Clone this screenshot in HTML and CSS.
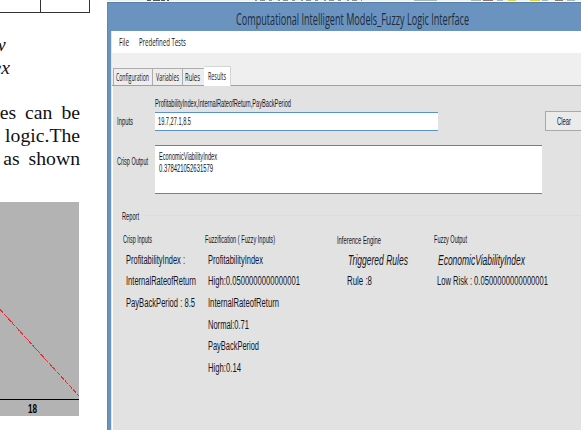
FILE: index.html
```html
<!DOCTYPE html>
<html lang="en">
<head>
    <meta charset="UTF-8">
    <meta name="viewport" content="width=device-width, initial-scale=1.0">
    <title>Fuzzy Logic Interface</title>
    <link rel="stylesheet" href="styles.css">
</head>
<body>

    <!-- Article column -->
    <div class="article">
        <div class="table-end"><div class="cell"></div><div class="cell last"></div></div>
        <div class="terms"><span>w</span><span>ex</span></div>
        <div class="paragraph">
            <p class="line"><span>es</span><span>can</span><span>be</span></p>
            <p class="line"><span>logic.The</span></p>
            <p class="line"><span>as</span><span>shown</span></p>
        </div>
        <svg class="chart" width="79" height="214">
            <rect width="79" height="214" fill="#b3b3b3"/>
            <path d="M0 107.500L79 194" stroke="#e2303a" stroke-width="1" stroke-dasharray="5 1" shape-rendering="crispEdges"/>
            <path d="M0 197.500H79" stroke="#000"/>
            <text x="28" y="211" textLength="9" lengthAdjust="spacingAndGlyphs" class="tick">18</text>
        </svg>
    </div>

    <!-- Application window -->
    <div class="side">
        <svg class="behind" width="474" height="2">
            <path d="M0 .5H474" stroke="#eef1f4"/>
            <path d="M40 .5H62" stroke="#555" stroke-dasharray="4 2 7 1"/>
            <path d="M148 .5H255" stroke="#8b8f92" stroke-dasharray="2 3 5 4 3 6"/>
            <path d="M307 .5H330M364 .5H374M390 .5H396M435 .5H441M460 .5H468" stroke="#a7b4bd"/>
            <path d="M376 .5H386M448 .5H456" stroke="#8d7770"/>
            <path d="M401 .5H409M423 .5H433" stroke="#d9d447"/>
        </svg>
        <div class="window">
            <div class="titlebar">
                <svg width="233" height="28"><text y="22" textLength="233" lengthAdjust="spacingAndGlyphs">Computational Intelligent Models_Fuzzy Logic Interface</text></svg>
            </div>
            <div class="client">
                <div class="menu">
                    <svg width="10" height="22"><text y="15" textLength="10" lengthAdjust="spacingAndGlyphs">File</text></svg>
                    <svg width="47" height="22"><text y="15" textLength="47" lengthAdjust="spacingAndGlyphs">Predefined Tests</text></svg>
                </div>
                <div class="tabs">
                    <div class="tab first"><svg width="33" height="16"><text y="12" textLength="33" lengthAdjust="spacingAndGlyphs">Configuration</text></svg></div>
                    <div class="tab"><svg width="23" height="16"><text y="12" textLength="23" lengthAdjust="spacingAndGlyphs">Variables</text></svg></div>
                    <div class="tab rules"><svg width="15" height="16"><text y="12" textLength="15" lengthAdjust="spacingAndGlyphs">Rules</text></svg></div>
                    <div class="tab active"><svg width="18" height="19"><text y="13" textLength="18" lengthAdjust="spacingAndGlyphs">Results</text></svg></div>
                </div>
                <div class="panel">
                    <svg class="hint" width="136" height="14"><text y="10" textLength="136" lengthAdjust="spacingAndGlyphs">ProfitabilityIndex,InternalRateofReturn,PayBackPeriod</text></svg>
                    <div class="inputs">
                        <svg class="label" width="16" height="19"><text y="14" textLength="16" lengthAdjust="spacingAndGlyphs">Inputs</text></svg>
                        <div class="field"><svg width="33" height="17"><text y="12" textLength="33" lengthAdjust="spacingAndGlyphs">19.7,27.1,8.5</text></svg></div>
                        <div class="clear"><svg width="14" height="18"><text y="13" textLength="14" lengthAdjust="spacingAndGlyphs">Clear</text></svg></div>
                    </div>
                    <div class="output">
                        <svg class="label" width="31" height="24"><text y="20" textLength="31" lengthAdjust="spacingAndGlyphs">Crisp Output</text></svg>
                        <div class="result">
                            <svg width="58" height="11"><text y="9" textLength="58" lengthAdjust="spacingAndGlyphs">EconomicViabilityIndex</text></svg>
                            <svg width="54" height="12"><text y="9.500" textLength="54" lengthAdjust="spacingAndGlyphs">0.378421052631579</text></svg>
                        </div>
                    </div>
                    <div class="legend">
                        <svg width="17" height="14"><text y="11" textLength="17" lengthAdjust="spacingAndGlyphs">Report</text></svg>
                    </div>
                    <div class="report">
                        <div class="col">
                            <svg class="head" width="29" height="14"><text y="10" textLength="29" lengthAdjust="spacingAndGlyphs">Crisp Inputs</text></svg>
                            <div class="rows">
                                <svg width="59" height="21.7"><text y="15" textLength="59" lengthAdjust="spacingAndGlyphs">ProfitabilityIndex :</text></svg>
                                <svg width="70" height="21.7"><text y="15" textLength="70" lengthAdjust="spacingAndGlyphs">InternalRateofReturn</text></svg>
                                <svg width="69" height="21.7"><text y="15" textLength="69" lengthAdjust="spacingAndGlyphs">PayBackPeriod : 8.5</text></svg>
                            </div>
                        </div>
                        <div class="col">
                            <svg class="head" width="70" height="14"><text y="10" textLength="70" lengthAdjust="spacingAndGlyphs">Fuzzification ( Fuzzy Inputs)</text></svg>
                            <div class="rows">
                                <svg width="55" height="21.7"><text y="15" textLength="55" lengthAdjust="spacingAndGlyphs">ProfitabilityIndex</text></svg>
                                <svg width="92" height="21.7"><text y="15" textLength="92" lengthAdjust="spacingAndGlyphs">High:0.0500000000000001</text></svg>
                                <svg width="71" height="21.7"><text y="15" textLength="71" lengthAdjust="spacingAndGlyphs">InternalRateofReturn</text></svg>
                                <svg width="41" height="21.7"><text y="15" textLength="41" lengthAdjust="spacingAndGlyphs">Normal:0.71</text></svg>
                                <svg width="51" height="21.7"><text y="15" textLength="51" lengthAdjust="spacingAndGlyphs">PayBackPeriod</text></svg>
                                <svg width="33" height="21.7"><text y="15" textLength="33" lengthAdjust="spacingAndGlyphs">High:0.14</text></svg>
                            </div>
                        </div>
                        <div class="col">
                            <svg class="head" width="44" height="14"><text y="11" textLength="44" lengthAdjust="spacingAndGlyphs">Inference Engine</text></svg>
                            <div class="rows inset">
                                <svg class="italic" width="63" height="21.7"><text x="1" y="16" textLength="60" lengthAdjust="spacingAndGlyphs">Triggered Rules</text></svg>
                                <svg width="25" height="21.7"><text y="15" textLength="25" lengthAdjust="spacingAndGlyphs">Rule :8</text></svg>
                            </div>
                        </div>
                        <div class="col">
                            <svg class="head" width="33" height="14"><text y="10" textLength="33" lengthAdjust="spacingAndGlyphs">Fuzzy Output</text></svg>
                            <div class="rows">
                                <svg class="italic" width="90" height="21.7"><text x="1" y="16" textLength="87" lengthAdjust="spacingAndGlyphs">EconomicViabilityIndex</text></svg>
                                <svg width="111" height="21.7"><text y="15" textLength="111" lengthAdjust="spacingAndGlyphs">Low Risk : 0.0500000000000001</text></svg>
                            </div>
                        </div>
                    </div>
                </div>
            </div>
        </div>
    </div>

</body>
</html>
```

FILE: styles.css
```css
* {
    box-sizing: border-box;
}

body {
    margin: 0;
    width: 581px;
    height: 430px;
    overflow: hidden;
    display: flex;
    background: #ffffff;
    font-family: "Liberation Sans", Arial, sans-serif;
}

svg {
    display: block;
    flex: none;
    overflow: visible;
}

/* article column */
.article {
    width: 107px;
    flex: none;
    font-family: "Liberation Serif", "Times New Roman", serif;
    font-size: 19.7px;
    color: #111;
}

.table-end {
    display: flex;
    width: 90px;
    height: 13px;
    border-bottom: 1px solid #333;
}

.cell {
    width: 41px;
    border-right: 1px solid #333;
}

.cell.last {
    width: 49px;
}

.terms {
    height: 88px;
    padding-top: 20px;
    display: flex;
    flex-direction: column;
    font-style: italic;
    line-height: 23px;
}

.terms span {
    width: 6px;
    display: flex;
    justify-content: flex-end;
}

.terms span + span {
    width: 10px;
}

.paragraph {
    height: 101px;
}

.line {
    margin: 0;
    width: 80px;
    height: 23px;
    line-height: 23px;
    display: flex;
    justify-content: flex-end;
    gap: 9px;
}

.tick {
    font: bold 12px "Liberation Sans", Arial, sans-serif;
}

/* application window */
.side {
    width: 474px;
    flex: none;
}

.window {
    height: 428px;
    padding-left: 4px;
    background: #6a94bf;
    border-left: 1px solid #5c89b5;
    border-top: 1px solid #5681ab;
}

.titlebar {
    height: 28px;
    padding-left: 124px;
    font-family: "Open Sans", sans-serif;
    font-size: 16px;
    fill: #1d2b3a;
}

.client {
    height: 399px;
    margin-left: -1px;
    background: #efefef;
    border-left: 1px solid #dfe8f2;
    font-size: 10px;
    fill: #14141c;
}

.menu {
    display: flex;
    gap: 10px;
    height: 22px;
    padding-left: 7px;
    background: #ffffff;
    font-family: "Open Sans", sans-serif;
}

.tabs {
    display: flex;
    align-items: flex-end;
    height: 33px;
    padding-left: 1px;
    border-bottom: 1px solid #9fa2a2;
    font-family: "Open Sans", sans-serif;
}

.tab {
    width: 30px;
    height: 17px;
    padding-left: 3px;
    border: 1px solid #adadad;
    border-left: none;
    border-bottom: none;
    background: #ededed;
}

.tab.first {
    width: 40px;
    border-left: 1px solid #adadad;
    padding-left: 2px;
}

.tab.rules {
    width: 21px;
    padding-left: 2px;
    border-right: none;
}

.tab.active {
    width: 27px;
    height: 20px;
    padding-left: 4px;
    margin-bottom: -1px;
    background: #ffffff;
    border-color: #d5d5d5;
}

.panel {
    height: 344px;
    padding-top: 11px;
    background: #e2e2e2;
    border-left: 1px solid #ffffff;
}

.hint {
    margin-left: 42px;
}

.inputs {
    display: flex;
    height: 34px;
    padding-left: 4px;
}

.label {
    margin-right: 22px;
}

.field {
    flex: none;
    width: 283px;
    height: 19px;
    margin-top: 1px;
    padding-left: 3px;
    background: #ffffff;
    border-top: 1px solid #5a92cd;
    border-bottom: 1px solid #5a92cd;
}

.clear {
    flex: none;
    width: 40px;
    height: 20px;
    margin-left: 107px;
    padding-left: 11px;
    background: #ebebeb;
    border: 1px solid #a9a9a9;
}

.output {
    display: flex;
    height: 64px;
    padding-left: 4px;
}

.output .label {
    margin-right: 7px;
}

.result {
    width: 387px;
    height: 49px;
    padding: 5px 0 0 4px;
    background: #ffffff;
    border-top: 1px solid #7e7e7e;
    border-bottom: 1px solid #7e7e7e;
}

.legend {
    display: flex;
    height: 24px;
    padding-left: 9px;
}

.legend::after {
    content: "";
    flex: 1;
    height: 1px;
    margin: 6px 0 0 4px;
    background: #dcdcdc;
}

.report {
    display: grid;
    grid-template-columns: 82px 132px 97px 1fr;
    padding-left: 10px;
}

.rows {
    padding: 1.5px 0 0 3px;
    font-size: 12.5px;
}

.rows.inset {
    padding-left: 10px;
}

.italic {
    font-size: 14px;
    font-style: italic;
}
```
